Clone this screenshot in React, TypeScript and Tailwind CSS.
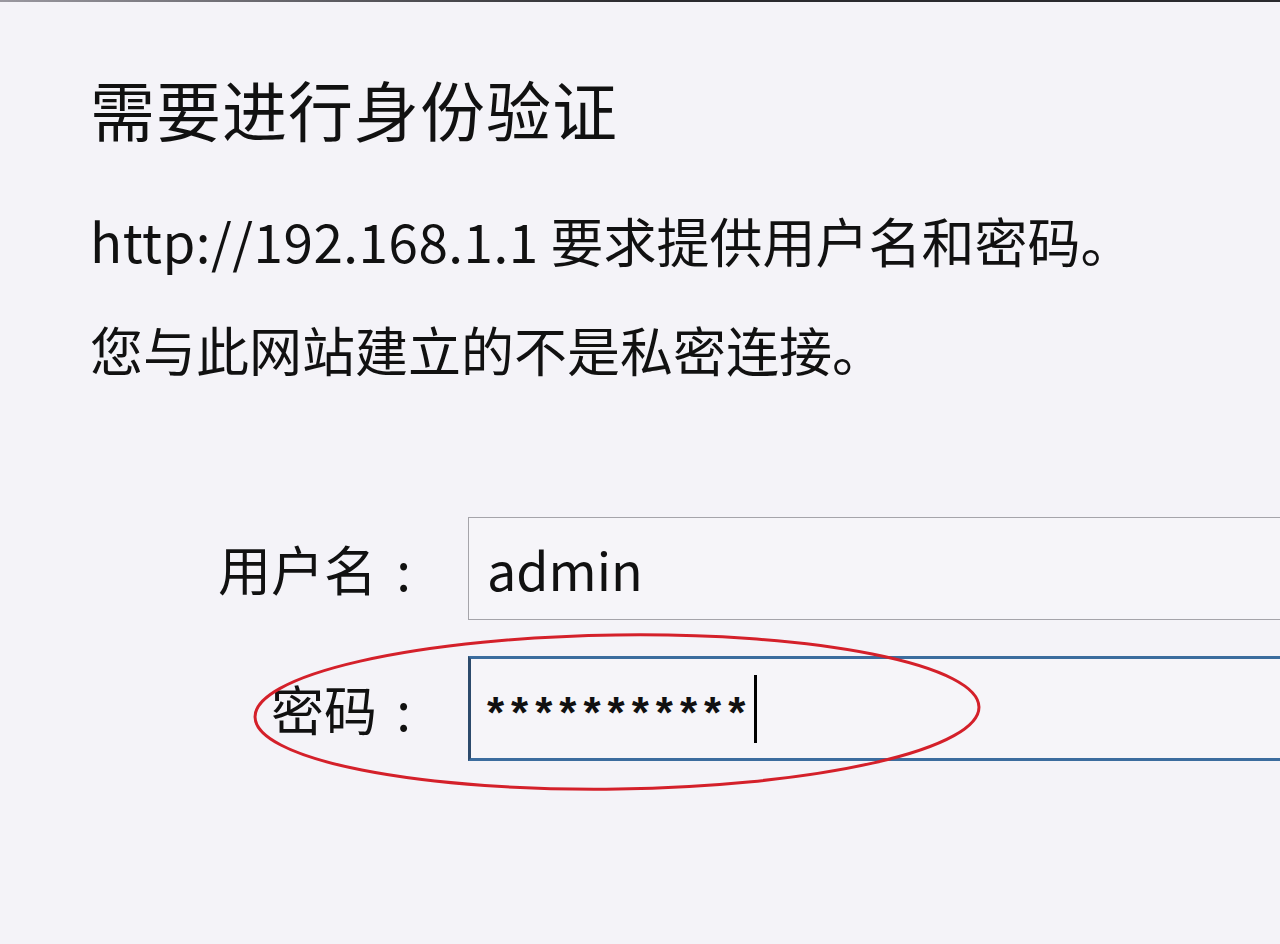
import React from 'react'

const font = { fontFamily: '"Noto Sans CJK SC", "Noto Sans", sans-serif' }

function Label({ text }: { text: string }) {
  return (
    <div className="flex w-[430px] justify-end text-[53px] leading-[53px]">
      <span>{text}</span>
      <span className="w-[53px] text-center">:</span>
    </div>
  )
}

export default function App() {
  return (
    <div className="relative h-[944px] w-[1280px] overflow-hidden bg-[#f4f3f8] text-[#111]" style={font}>
      <div className="h-[2px] w-full bg-gradient-to-r from-[#9a98a0] via-[#2a2a2e] to-[#2a2a2e]" />

      <div className="pl-[90px]">
        <h1 className="mt-[68px] h-[76px] text-[65px] font-normal leading-[76px] tracking-[1px]">需要进行身份验证</h1>
        <p className="mt-[68px] h-[53px] text-[53px] leading-[53px]">
          <span className="tracking-[0.5px]">http://192.168.1.1</span> 要求提供用户名和密码。
        </p>
        <p className="mt-[56px] h-[53px] text-[53px] leading-[53px]">您与此网站建立的不是私密连接。</p>
      </div>

      <div className="mt-[141px] flex flex-col gap-[36px]">
        <div className="flex items-center">
          <Label text="用户名" />
          <div className="ml-[38px] -mr-4 flex h-[103px] flex-1 items-center border-[1.5px] border-[#a5a4aa] bg-[#f6f5f9] pl-[18px] text-[52px]">
            admin
          </div>
        </div>
        <div className="flex items-center">
          <Label text="密码" />
          <div className="ml-[38px] -mr-4 flex h-[105px] flex-1 items-center border-[3px] border-[#3b6c9e] border-l-[#2c4a6c] bg-[#f6f5f9] pl-[16px]">
            <span
              className="mt-[8px] text-[44px] font-bold leading-[44px] tracking-[7px]"
              style={{ fontFamily: '"Liberation Sans", sans-serif' }}
            >
              ***********
            </span>
            <span className="ml-[2px] h-[68px] w-[3px] bg-black" />
          </div>
        </div>
      </div>

      <svg className="pointer-events-none absolute left-0 top-0" width="1280" height="944">
        <ellipse
          cx="617"
          cy="712"
          rx="362"
          ry="77"
          fill="none"
          stroke="#d4202a"
          strokeWidth="3"
          transform="rotate(-0.8 617 712)"
        />
      </svg>
    </div>
  )
}
